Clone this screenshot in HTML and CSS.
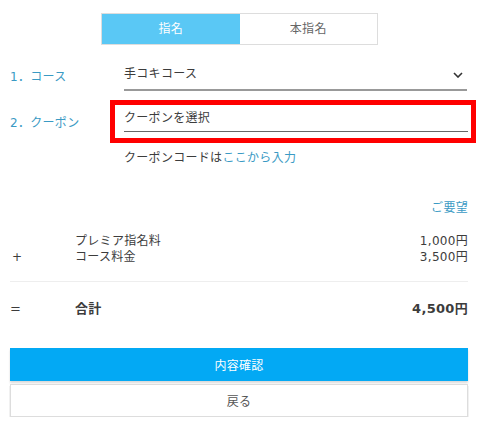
FILE: index.html
```html
<!DOCTYPE html>
<html lang="ja">
<head>
    <meta charset="UTF-8">
    <title>指名</title>
    <link rel="stylesheet" href="styles.css">
</head>
<body>

<div class="container">
    <div class="tabs">
        <div class="tab active">指名</div>
        <div class="tab">本指名</div>
    </div>

    <div class="form-row course-row">
        <div class="label">1．コース</div>
        <div class="field select">
            <span>手コキコース</span>
            <svg class="chevron" width="10" height="6" viewBox="0 0 10 6"><path d="M1 1l4 4 4-4" fill="none" stroke="#333" stroke-width="1.6"/></svg>
        </div>
    </div>

    <div class="form-row coupon-row">
        <div class="label">2．クーポン</div>
        <div class="highlight">
            <div class="field">クーポンを選択</div>
        </div>
    </div>

    <div class="coupon-code">クーポンコードは<a href="#">ここから入力</a></div>

    <div class="request"><a href="#">ご要望</a></div>

    <div class="price-list">
        <div class="price-row">
            <span class="op"></span>
            <span class="name">プレミア指名料</span>
            <span class="amount">1,000円</span>
        </div>
        <div class="price-row">
            <span class="op">+</span>
            <span class="name">コース料金</span>
            <span class="amount">3,500円</span>
        </div>
    </div>

    <div class="total-row">
        <span class="op">=</span>
        <span class="name">合計</span>
        <span class="amount">4,500円</span>
    </div>

    <button class="btn btn-primary">内容確認</button>
    <button class="btn btn-back">戻る</button>
</div>

</body>
</html>
```

FILE: styles.css
```css
body {
    font-family: "DejaVu Sans", "Noto Sans CJK JP", sans-serif;
    font-size: 12px;
    color: #3c3c3c;
    background-color: #fff;
    margin: 0;
    padding: 0;
    letter-spacing: 0.3px;
}
.container {
    width: 458px;
    margin-left: 10px;
    padding-top: 13px;
}
.tabs {
    display: flex;
    width: 275px;
    margin-left: 91px;
    border: 1px solid #ddd;
}
.tab {
    flex: 1;
    text-align: center;
    line-height: 30px;
    font-size: 12px;
    color: #666;
    background-color: #fff;
}
.tab.active {
    background-color: #5ac8f5;
    color: #fff;
}
.form-row {
    display: flex;
    align-items: center;
}
.course-row {
    margin-top: 14px;
}
.label {
    width: 100px;
    color: #3a9ac4;
    font-size: 12px;
}
.field {
    flex: 1;
    height: 30px;
    line-height: 32px;
    border-bottom: 2px solid #999;
    font-size: 12px;
}
.select {
    display: flex;
    justify-content: space-between;
    align-items: center;
    margin-left: 14px;
    margin-right: 1px;
}
.chevron {
    margin-right: 4px;
    margin-top: 2px;
}
.coupon-row {
    margin-top: 9px;
}
.highlight {
    flex: 1;
    border: 5px solid #f00;
    padding: 0 3px 2px 9px;
    height: 31px;
    margin-right: -8px;
}
.highlight .field {
    height: 26px;
    line-height: 26px;
    border-bottom-width: 1px;
    border-bottom-color: #666;
}
.coupon-code {
    margin-top: 6px;
    margin-left: 114px;
    line-height: 18px;
}
a {
    color: #3a9ac4;
    text-decoration: none;
}
.request {
    text-align: right;
    margin-top: 32px;
    line-height: 18px;
}
.price-list {
    margin-top: 16px;
    padding-bottom: 16px;
    border-bottom: 1px solid #eee;
}
.price-row, .total-row {
    display: flex;
    line-height: 16px;
}
.op {
    width: 63px;
    padding-left: 2px;
}
.name {
    flex: 1;
}
.total-row {
    margin-top: 19px;
    font-weight: bold;
    font-size: 13px;
}
.total-row .op {
    padding-left: 0;
    font-weight: normal;
    width: 65px;
}
.btn {
    display: block;
    width: 100%;
    height: 33px;
    font-family: inherit;
    font-size: 12px;
    letter-spacing: 0.3px;
    border: none;
    cursor: pointer;
}
.btn-primary {
    margin-top: 31px;
    background-color: #03a9f4;
    color: #fff;
    box-shadow: 0 2px 2px rgba(0, 0, 0, 0.15);
}
.btn-back {
    margin-top: 3px;
    background-color: #fff;
    color: #555;
    border: 1px solid #ddd;
    box-shadow: 0 2px 1px #aaa;
}
```
